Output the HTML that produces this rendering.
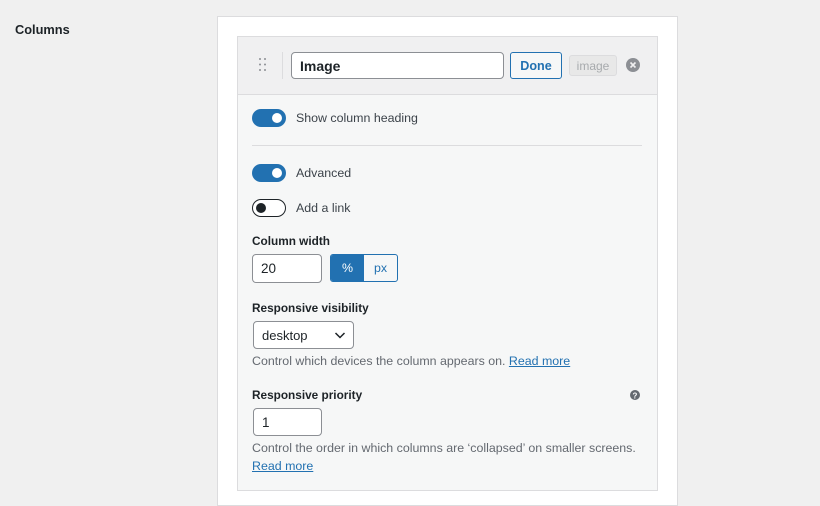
<!DOCTYPE html>
<html><head><style>
*{box-sizing:border-box;margin:0;padding:0}
body{width:820px;height:497px;overflow:hidden;background:#f0f0f0;font-family:"Liberation Sans",sans-serif;font-size:12.4px;color:#3c434a;position:relative}
.a{position:absolute}
.t{position:absolute;white-space:nowrap;line-height:16px}
.b{font-weight:bold;color:#1d2327;font-size:11.8px}
.tg{position:absolute;width:34px;height:18px;border-radius:9px;background:#2271b1}
.tg::after{content:"";position:absolute;top:4px;right:4px;width:10px;height:10px;border-radius:50%;background:#fff}
.off{background:#fff;border:1px solid #1d2327}
.off::after{left:3px;top:3px;background:#1d2327}
.inp{position:absolute;background:#fff;border:1px solid #8c8f94;border-radius:4px;padding-left:8px;display:flex;align-items:center;color:#1d2327;font-size:13.5px}
a{color:#2271b1;text-decoration:underline}
</style></head><body>
<div class="t b" style="left:15px;top:22px;font-size:12.8px">Columns</div>
<div class="a" style="left:217px;top:16px;width:461px;height:490px;background:#fff;border:1px solid #dcdcde"></div>
<div class="a" style="left:237px;top:36px;width:421px;height:455px;background:#f6f7f7;border:1px solid #dcdcde"></div>
<div class="a" style="left:238px;top:37px;width:419px;height:58px;background:#f0f0f1;border-bottom:1px solid #dcdcde"></div>
<svg class="a" style="left:258px;top:57px" width="10" height="16"><g fill="#8c8f94"><circle cx="2" cy="2" r="1"/><circle cx="7" cy="2" r="1"/><circle cx="2" cy="7.5" r="1"/><circle cx="7" cy="7.5" r="1"/><circle cx="2" cy="13" r="1"/><circle cx="7" cy="13" r="1"/></g></svg>
<div class="a" style="left:282px;top:52px;width:1px;height:27px;background:#dcdcde"></div>
<div class="inp" style="left:291px;top:52px;width:213px;height:27px;font-weight:bold;font-size:14px">Image</div>
<div class="a" style="left:510px;top:52px;width:52px;height:27px;border:1px solid #2271b1;border-radius:3px;background:#f6f7f7;color:#2271b1;font-weight:bold;display:flex;align-items:center;justify-content:center;font-size:12.6px">Done</div>
<div class="a" style="left:569px;top:55px;width:48px;height:21px;border:1px solid #dcdcde;border-radius:3px;background:#e8e8e8;color:#a7aaad;display:flex;align-items:center;justify-content:center;font-size:12px">image</div>
<svg class="a" style="left:626px;top:58px" width="14" height="14"><circle cx="7" cy="7" r="7" fill="#8c8f94"/><path d="M4.5 4.5l5 5M9.5 4.5l-5 5" stroke="#f0f0f1" stroke-width="1.6"/></svg>
<div class="tg" style="left:252px;top:109px"></div>
<div class="t" style="left:296px;top:110px">Show column heading</div>
<div class="a" style="left:252px;top:145px;width:390px;height:1px;background:#dcdcde"></div>
<div class="tg" style="left:252px;top:164px"></div>
<div class="t" style="left:296px;top:165px">Advanced</div>
<div class="tg off" style="left:252px;top:199px"></div>
<div class="t" style="left:296px;top:200px">Add a link</div>
<div class="t b" style="left:252px;top:233px">Column width</div>
<div class="inp" style="left:252px;top:254px;width:70px;height:29px">20</div>
<div class="a" style="left:330px;top:254px;width:68px;height:28px;border:1px solid #2271b1;border-radius:3px;background:#f6f7f7;display:flex;overflow:hidden">
<div style="width:33px;background:#2271b1;color:#fff;display:flex;align-items:center;justify-content:center">%</div>
<div style="flex:1;color:#2271b1;display:flex;align-items:center;justify-content:center">px</div></div>
<div class="t b" style="left:252px;top:300px">Responsive visibility</div>
<div class="inp" style="left:253px;top:321px;width:101px;height:28px;font-size:13px">desktop
<svg class="a" style="left:80px;top:8px" width="12" height="10"><path d="M1.5 3l4.5 4.5 4.5-4.5" stroke="#1d2327" stroke-width="1.5" fill="none"/></svg></div>
<div class="t" style="left:252px;top:353px;color:#646970">Control which devices the column appears on. <a>Read more</a></div>
<div class="t b" style="left:252px;top:387px">Responsive priority</div>
<svg class="a" style="left:630px;top:390px" width="10" height="10"><circle cx="5" cy="5" r="5" fill="#646970"/><text x="5" y="8.5" font-size="8" font-weight="bold" fill="#fff" text-anchor="middle" font-family="Liberation Sans">?</text></svg>
<div class="inp" style="left:253px;top:408px;width:69px;height:28px">1</div>
<div class="t" style="left:252px;top:440px;color:#646970">Control the order in which columns are ‘collapsed’ on smaller screens.</div>
<div class="t" style="left:252px;top:458px"><a>Read more</a></div>
</body></html>
